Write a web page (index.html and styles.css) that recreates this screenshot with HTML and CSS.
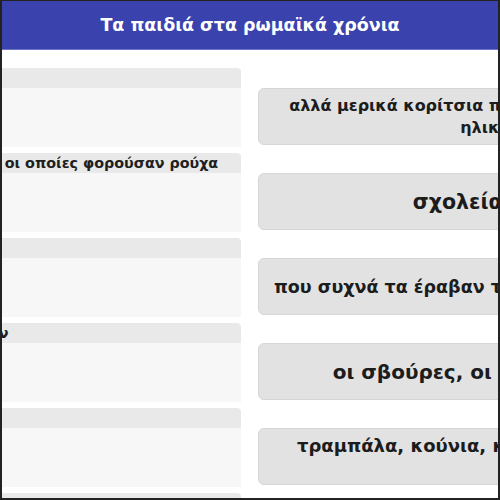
FILE: index.html
```html
<!DOCTYPE html>
<html lang="el">
<head>
    <meta charset="UTF-8">
    <meta name="viewport" content="width=device-width, initial-scale=1.0">
    <title>Τα παιδιά στα ρωμαϊκά χρόνια</title>
    <link rel="stylesheet" href="styles.css">
</head>
<body>

    <div class="frame">
        <div class="header">Τα παιδιά στα ρωμαϊκά χρόνια</div>

        <div class="board">
            <div class="zone">
                <div class="zone-label">Στα ρωμαϊκά χρόνια</div>
                <div class="zone-drop"></div>
            </div>
            <div class="card card-md">αλλά μερικά κορίτσια παντρεύονταν από πολύ μικρή<br>ηλικία, στα 12.</div>

            <div class="zone">
                <div class="zone-label">Τα κορίτσια έπαιζαν με κούκλες, οι οποίες φορούσαν ρούχα</div>
                <div class="zone-drop"></div>
            </div>
            <div class="card card-xl">σχολεία με δάσκαλο</div>

            <div class="zone">
                <div class="zone-label">Τα αγόρια πήγαιναν</div>
                <div class="zone-drop"></div>
            </div>
            <div class="card card-sm">που συχνά τα έραβαν τα κορίτσια με τα χέρια τους.</div>

            <div class="zone">
                <div class="zone-label">Τα αγαπημένα της παιχνίδια ήταν</div>
                <div class="zone-drop"></div>
            </div>
            <div class="card card-lg">οι σβούρες, οι μπάλες και τα ζάρια</div>

            <div class="zone">
                <div class="zone-label">Στις αυλές είχαν</div>
                <div class="zone-drop"></div>
            </div>
            <div class="card card-md2">τραμπάλα, κούνια, κρυφτό, κουτσό, σχοινάκι<br>κ.ά.</div>

            <div class="zone">
                <div class="zone-label">Πολλά κορίτσια</div>
                <div class="zone-drop"></div>
            </div>
            <div class="card card-md">δεν πήγαιναν σχολείο.</div>
        </div>
    </div>

</body>
</html>
```

FILE: styles.css
```css
body { margin: 0; background-color: #fff; font-family: "DejaVu Sans", Verdana, sans-serif; }
.frame { width: 500px; height: 500px; box-sizing: border-box; border: 2px solid #222; border-top-width: 1px; overflow: hidden; background-color: #fff; }
.header { height: 48px; line-height: 48px; background-color: #3a42ae; border-bottom: 1px solid #6d74c4; color: #fff; font-size: 17.5px; font-weight: bold; text-align: center; }
.board { display: grid; grid-template-columns: 514px 540px; column-gap: 17px; row-gap: 6px; margin-left: -275px; padding-top: 18px; }
.zone { display: flex; flex-direction: column; }
.zone-label { height: 20px; line-height: 20px; padding: 0 10px; background-color: #e9e9e9; border-radius: 4px 4px 0 0; color: #1e1e1e; font-size: 14.3px; font-weight: bold; white-space: nowrap; overflow: hidden; }
.zone-drop { height: 59px; background-color: #f7f7f7; }
.card { align-self: end; height: 57px; box-sizing: border-box; display: flex; align-items: center; justify-content: center; text-align: center; padding: 0 10px; background-color: #e2e2e2; border: 1px solid #d6d6d6; border-radius: 6px; color: #1c1c1c; font-weight: bold; margin-bottom: 2px; white-space: nowrap; }
.card-sm { font-size: 17.5px; }
.card-md { font-size: 16px; line-height: 22px; }
.card-md2 { font-size: 18px; line-height: 22px; }
.card-lg { font-size: 20px; }
.card-xl { font-size: 20.5px; }
```
